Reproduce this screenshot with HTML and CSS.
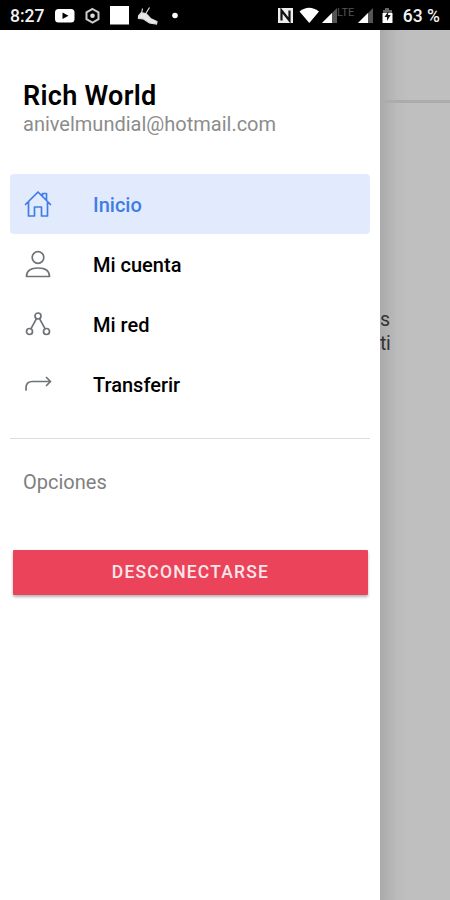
FILE: index.html
```html
<!DOCTYPE html>
<html lang="es">
<head>
  <meta charset="UTF-8">
  <title>Rich World</title>
  <link rel="stylesheet" href="styles.css">
</head>
<body>
  <div class="estado">
    <span class="hora">8:27</span>
    <svg class="avisos" width="126" height="30" viewBox="0 0 126 30">
      <rect x="0" y="9" width="19.500" height="13.5" rx="3.5" fill="#fff"/>
      <path d="M7.500 12.5l6 3.2-6 3.3z" fill="#000"/>
      <path d="M37.500 9l6 3.400v6.800l-6 3.400-6-3.400v-6.800z" fill="none" stroke="#ccc" stroke-width="2"/>
      <circle cx="37.500" cy="15.800" r="2.300" fill="#ddd"/>
      <rect x="55" y="6" width="19" height="18.500" fill="#fff"/>
      <path d="M83.500 16l3-3.500 5 1.500 4 4.500 6.500 3-.5 2.500-7-1-6-4-5-.5zM86.500 13.500l1-5M90.500 14l4-6.500" fill="#e8e8e8" stroke="#ddd" stroke-width="1.200"/>
      <circle cx="120" cy="15.500" r="2.800" fill="#fff"/>
    </svg>
    <svg class="senal" width="118" height="30" viewBox="0 0 118 30">
      <rect x="1" y="8" width="15" height="15" fill="#eee"/>
      <path d="M4.500 20.500v-10l8 10v-10" fill="none" stroke="#111" stroke-width="2.200"/>
      <path d="M22.500 11.500Q32 4 42 11.500L32.300 23z" fill="#fff"/>
      <path d="M45 23L60 8v15z" fill="#555"/>
      <path d="M45 23l10-10v10z" fill="#fff"/>
      <text class="lte" x="60" y="15.500">LTE</text>
      <path d="M81 23L96 8v15z" fill="#555"/>
      <path d="M81 23l10-10v10z" fill="#fff"/>
      <path d="M106 10h2V8h4v2h3v13h-9V10z" fill="#666"/>
      <path d="M105.500 13h10v10h-10z" fill="#fff"/>
      <path d="M111.500 11l-4 6h2.500v4l3.700-6H111z" fill="#111"/>
    </svg>
    <span class="bateria">63 %</span>
  </div>

  <div class="app">
    <nav class="menu">
      <header class="perfil">
        <h1>Rich World</h1>
        <p>anivelmundial@hotmail.com</p>
      </header>

      <ul class="lista">
        <li class="opcion activa">
          <svg width="28" height="28" viewBox="0 0 28 28">
            <path d="M1.500 14.500L14 2l12.500 12.500M4.500 12v14h6V17h7v9h6V12M18.500 6V3.500h4V10"/>
          </svg>
          <span>Inicio</span>
        </li>
        <li class="opcion">
          <svg width="28" height="28" viewBox="0 0 28 28">
            <circle cx="14" cy="7.500" r="5.800"/>
            <path d="M2.500 26.500c0-5.500 4-8.500 11.500-8.500s11.500 3 11.500 8.500z"/>
          </svg>
          <span>Mi cuenta</span>
        </li>
        <li class="opcion">
          <svg width="28" height="28" viewBox="0 0 28 28">
            <circle cx="14" cy="6" r="3"/>
            <circle cx="5.500" cy="21.500" r="3"/>
            <circle cx="22.500" cy="21.500" r="3"/>
            <path d="M12.500 8.700L7 18.700M15.500 8.700l5.500 10"/>
          </svg>
          <span>Mi red</span>
        </li>
        <li class="opcion">
          <svg width="28" height="28" viewBox="0 0 28 28">
            <path d="M2 20v-2c0-4.500 2-6.500 6.500-6.500H26M22.500 7.500l4 4-4 4"/>
          </svg>
          <span>Transferir</span>
        </li>
      </ul>

      <h2 class="titulo">Opciones</h2>
      <button class="salir">DESCONECTARSE</button>
    </nav>

    <main class="fondo">
      <div class="barra"></div>
      <p class="texto">s<br>ti</p>
    </main>
  </div>
</body>
</html>
```

FILE: styles.css
```css
* {
  box-sizing: border-box;
}

body {
  margin: 0;
  font-family: Roboto, sans-serif;
  background: #fff;
  color: #000;
  overflow: hidden;
}

.estado {
  display: flex;
  align-items: center;
  height: 30px;
  padding: 0 10px;
  background: #000;
  color: #f2f2f2;
  font-size: 17.5px;
  font-weight: 500;
  white-space: nowrap;
}

.hora {
  width: 45px;
}

.bateria {
  margin-left: 8px;
}

.hora,
.bateria {
  padding-top: 1px;
}

.senal {
  margin-left: auto;
}

.lte {
  font-size: 11px;
  font-weight: 400;
  fill: #555;
}

.app {
  display: flex;
  height: 870px;
}

.menu {
  width: 380px;
  padding: 0 10px;
  background: #fff;
}

.perfil {
  height: 144px;
  padding: 50px 13px 0;
}

.perfil h1 {
  margin: 0;
  font-size: 27px;
  font-weight: 600;
  line-height: 32px;
  letter-spacing: 0.3px;
}

.perfil p {
  margin: 0;
  font-size: 20px;
  line-height: 25px;
  color: #8c8c8c;
}

.lista {
  height: 265px;
  margin: 0;
  padding: 0;
  list-style: none;
  border-bottom: 1px solid #dcdcdc;
}

.opcion {
  display: flex;
  align-items: center;
  gap: 41px;
  height: 60px;
  padding: 0 14px;
  border-radius: 4px;
  font-size: 20px;
  font-weight: 500;
}

.opcion span {
  padding-top: 1px;
}

.opcion svg {
  fill: none;
  stroke: #6e7378;
  stroke-width: 1.7;
  stroke-linejoin: round;
  stroke-linecap: round;
}

.opcion.activa {
  background: #e2ebfe;
  color: #3f7de4;
}

.opcion.activa svg {
  stroke: #3f7de4;
}

.titulo {
  height: 110px;
  margin: 0;
  padding: 31px 13px 0;
  font-size: 20px;
  font-weight: 400;
  line-height: 24px;
  color: #808080;
}

.salir {
  display: block;
  width: 355px;
  height: 45px;
  margin: 1px 0 0 3px;
  padding: 0 0 1px;
  border: none;
  border-radius: 1px;
  background: #eb445a;
  box-shadow: 0 2px 3px rgba(0, 0, 0, 0.3);
  color: #fbe6ea;
  font-family: inherit;
  font-size: 17.5px;
  font-weight: 500;
  letter-spacing: 1.2px;
}

.fondo {
  flex: 1;
  overflow: hidden;
  background: linear-gradient(90deg, #aaa 0, #b3b3b3 9px, #bbb 17px, #bfbfbf 28px);
}

.barra {
  height: 73px;
  border-bottom: 3px solid #acacac;
}

.texto {
  margin: 205px 0 0;
  font-size: 19.5px;
  line-height: 24px;
  letter-spacing: -0.5px;
  color: #333;
}
```
